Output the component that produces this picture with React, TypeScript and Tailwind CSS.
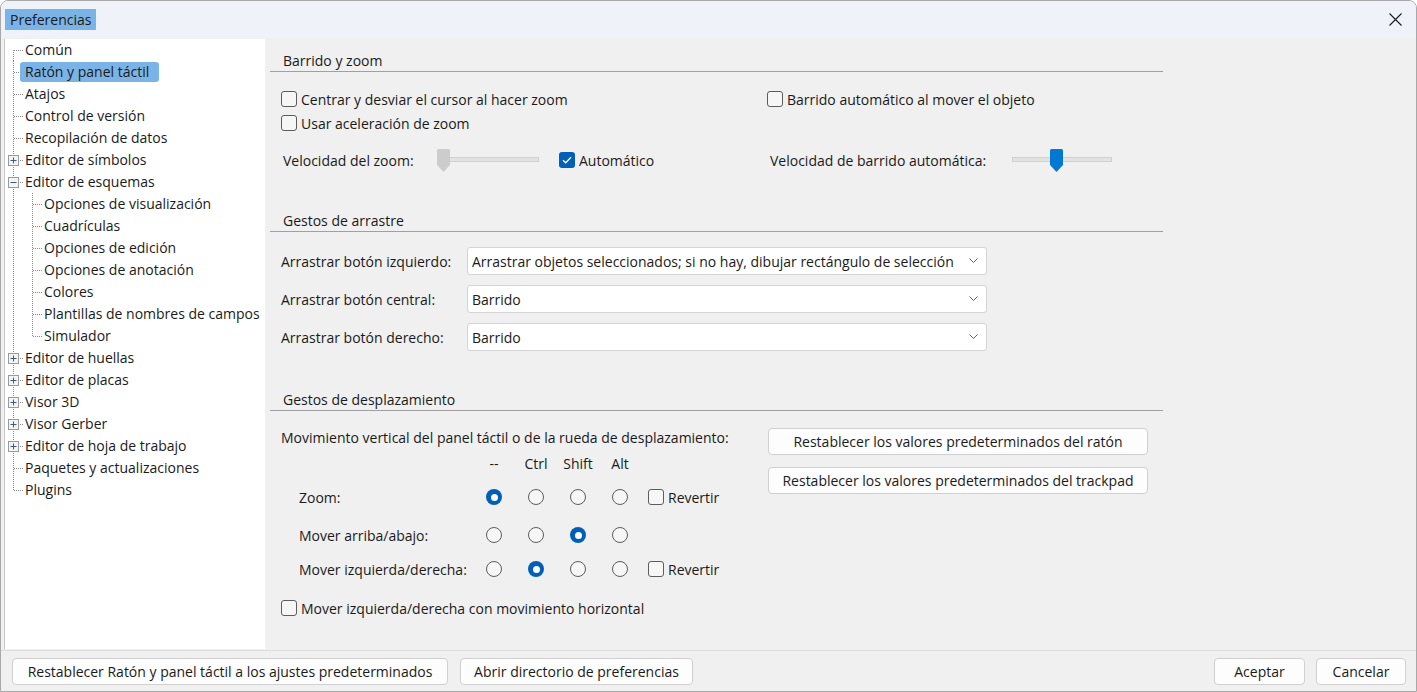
import React from "react";

const FONT = "font-['Open_Sans',sans-serif]";

function Check({ checked = false }: { checked?: boolean }) {
  if (checked) {
    return (
      <span className="w-4 h-4 shrink-0 rounded-[3px] bg-[#005fb8] flex items-center justify-center">
        <svg width="10" height="8" viewBox="0 0 10 8">
          <path d="M1 4.2 L3.7 6.8 L9 1.2" fill="none" stroke="white" strokeWidth="1.3" />
        </svg>
      </span>
    );
  }
  return <span className="w-4 h-4 shrink-0 rounded-[3px] border border-[#5c5c5c] bg-[#f6f6f6]" />;
}

function Radio({ checked = false }: { checked?: boolean }) {
  if (checked) {
    return (
      <span className="w-4 h-4 rounded-full bg-[#005fb8] flex items-center justify-center">
        <span className="w-[7px] h-[7px] rounded-full bg-white" />
      </span>
    );
  }
  return <span className="w-4 h-4 rounded-full border border-[#5c5c5c] bg-[#f6f6f6]" />;
}

function Thumb({ color }: { color: string }) {
  return (
    <svg width="13" height="23" viewBox="0 0 13 23">
      <path d="M1.5 0 H11.5 Q13 0 13 1.5 V16 L6.5 23 L0 16 V1.5 Q0 0 1.5 0Z" fill={color} />
    </svg>
  );
}

function Slider({ width, pos, color }: { width: number; pos: number; color: string }) {
  return (
    <div className="relative h-[23px]" style={{ width }}>
      <div className="absolute left-0 right-0 top-[8px] h-[5px] bg-[#e3e3e3] border border-[#d0d0d0]" />
      <div className="absolute top-0" style={{ left: pos }}>
        <Thumb color={color} />
      </div>
    </div>
  );
}

function Select({ value }: { value: string }) {
  return (
    <div className="w-[520px] h-[28px] bg-white border border-[#d4d4d4] rounded-[3px] flex items-center pl-[4px] pr-[8px] justify-between">
      <span>{value}</span>
      <svg width="9" height="6" viewBox="0 0 9 6">
        <path d="M0.5 0.5 L4.5 4.5 L8.5 0.5" fill="none" stroke="#606060" strokeWidth="1" />
      </svg>
    </div>
  );
}

function Button({ children, className = "" }: { children: React.ReactNode; className?: string }) {
  return (
    <div
      className={
        "h-[27px] bg-[#fdfdfd] border border-[#d0d0d0] rounded-[4px] flex items-center justify-center " + className
      }
    >
      {children}
    </div>
  );
}

function SectionHeader({ title, mt }: { title: string; mt: string }) {
  return (
    <div className={"h-[21px] border-b border-[#a0a0a0] pl-[13px] flex items-center " + mt}>
      <span className="leading-[20px]">{title}</span>
    </div>
  );
}

type TreeItem = {
  label: string;
  level: 0 | 1;
  exp?: "+" | "-";
  first?: boolean;
  last?: boolean;
  lastChild?: boolean;
  hl?: boolean;
};

const tree: TreeItem[] = [
  { label: "Común", level: 0, first: true },
  { label: "Ratón y panel táctil", level: 0, hl: true },
  { label: "Atajos", level: 0 },
  { label: "Control de versión", level: 0 },
  { label: "Recopilación de datos", level: 0 },
  { label: "Editor de símbolos", level: 0, exp: "+" },
  { label: "Editor de esquemas", level: 0, exp: "-" },
  { label: "Opciones de visualización", level: 1 },
  { label: "Cuadrículas", level: 1 },
  { label: "Opciones de edición", level: 1 },
  { label: "Opciones de anotación", level: 1 },
  { label: "Colores", level: 1 },
  { label: "Plantillas de nombres de campos", level: 1 },
  { label: "Simulador", level: 1, lastChild: true },
  { label: "Editor de huellas", level: 0, exp: "+" },
  { label: "Editor de placas", level: 0, exp: "+" },
  { label: "Visor 3D", level: 0, exp: "+" },
  { label: "Visor Gerber", level: 0, exp: "+" },
  { label: "Editor de hoja de trabajo", level: 0, exp: "+" },
  { label: "Paquetes y actualizaciones", level: 0 },
  { label: "Plugins", level: 0, last: true },
];

function TreeRow({ item }: { item: TreeItem }) {
  const dot = { stroke: "#8a8a8a", strokeDasharray: "1 1", strokeWidth: 1 } as const;
  return (
    <div className="relative h-[22px] flex items-center">
      <svg className="absolute left-0 top-0" width="44" height="22" viewBox="0 0 44 22">
        <line x1="8.5" y1={item.first ? 11 : 0} x2="8.5" y2={item.last ? 11.5 : 22} {...dot} />
        {item.level === 0 && <line x1={item.exp ? 13 : 9} y1="11.5" x2="18" y2="11.5" {...dot} />}
        {item.level === 1 && (
          <>
            <line x1="27.5" y1="0" x2="27.5" y2={item.lastChild ? 11.5 : 22} {...dot} />
            <line x1="28" y1="11.5" x2="37" y2="11.5" {...dot} />
          </>
        )}
        {item.exp && (
          <>
            <rect x="3.5" y="6.5" width="10" height="10" fill="#f4f4f4" stroke="#9a9a9a" />
            <line x1="5.5" y1="11.5" x2="11.5" y2="11.5" stroke="#3b5a8c" strokeWidth="1" />
            {item.exp === "+" && <line x1="8.5" y1="8.5" x2="8.5" y2="14.5" stroke="#3b5a8c" strokeWidth="1" />}
          </>
        )}
      </svg>
      {item.hl ? (
        <span className="relative ml-[15px] whitespace-nowrap leading-[20px] bg-[#7ab4e6] pl-[5px] pr-[10px] py-[0px] rounded-[3px]">
          {item.label}
        </span>
      ) : (
        <span className={(item.level === 0 ? "ml-[20px]" : "ml-[39px]") + " relative whitespace-nowrap leading-[20px]"}>
          {item.label}
        </span>
      )}
    </div>
  );
}

export default function App() {
  return (
    <div
      className={
        FONT +
        " w-[1417px] h-[692px] flex flex-col bg-[#f0f0f0] border border-[#a8a8a8] rounded-t-[8px] overflow-hidden text-[14px] text-[#1a1a1a]"
      }
    >
      {/* title bar */}
      <div className="h-[37px] shrink-0 bg-[#eff3f9] flex items-center justify-between pl-[4px] pr-[14px]">
        <span className="bg-[#7ab4e6] px-[5px] leading-[21px]">Preferencias</span>
        <svg width="13" height="13" viewBox="0 0 13 13">
          <path d="M0.5 0.5 L12.5 12.5 M12.5 0.5 L0.5 12.5" stroke="#1a1a1a" strokeWidth="1.1" />
        </svg>
      </div>

      {/* body */}
      <div className="flex-1 flex min-h-0">
        <div className="w-[261px] mt-[1px] ml-[3px] mb-[1px] bg-white border-l border-[#c8c8c8] shrink-0">
          {tree.map((t) => (
            <TreeRow key={t.label} item={t} />
          ))}
        </div>

        <div className="pl-[5px] w-[898px] flex flex-col">
          {/* Barrido y zoom */}
          <SectionHeader title="Barrido y zoom" mt="mt-[13px]" />
          <div className="flex pl-[11px]">
            <div className="w-[486px] flex flex-col">
              <div className="h-[24px] mt-[15px] flex items-center gap-[4px]">
                <Check />
                <span>Centrar y desviar el cursor al hacer zoom</span>
              </div>
              <div className="h-[24px] flex items-center gap-[4px]">
                <Check />
                <span>Usar aceleración de zoom</span>
              </div>
              <div className="h-[24px] mt-[13px] flex items-center pl-[2px]">
                <span className="w-[156px]">Velocidad del zoom:</span>
                <div className="mt-[1px]">
                  <Slider width={100} pos={-2} color="#cccccc" />
                </div>
                <div className="ml-[20px] flex items-center gap-[4px]">
                  <Check checked />
                  <span>Automático</span>
                </div>
              </div>
            </div>
            <div className="flex flex-col">
              <div className="h-[24px] mt-[15px] flex items-center gap-[4px]">
                <Check />
                <span>Barrido automático al mover el objeto</span>
              </div>
              <div className="h-[24px] mt-[37px] flex items-center pl-[3px]">
                <span className="w-[242px]">Velocidad de barrido automática:</span>
                <div className="mt-[1px]">
                  <Slider width={100} pos={38} color="#0078d4" />
                </div>
              </div>
            </div>
          </div>

          {/* Gestos de arrastre */}
          <SectionHeader title="Gestos de arrastre" mt="mt-[39px]" />
          <div className="pl-[11px] flex flex-col gap-[10px] mt-[15px]">
            <div className="flex items-center">
              <span className="w-[186px]">Arrastrar botón izquierdo:</span>
              <Select value="Arrastrar objetos seleccionados; si no hay, dibujar rectángulo de selección" />
            </div>
            <div className="flex items-center">
              <span className="w-[186px]">Arrastrar botón central:</span>
              <Select value="Barrido" />
            </div>
            <div className="flex items-center">
              <span className="w-[186px]">Arrastrar botón derecho:</span>
              <Select value="Barrido" />
            </div>
          </div>

          {/* Gestos de desplazamiento */}
          <SectionHeader title="Gestos de desplazamiento" mt="mt-[39px]" />
          <div className="flex pl-[11px]">
            <div className="w-[487px] flex flex-col">
              <div className="h-[20px] mt-[16px] flex items-center whitespace-nowrap">
                Movimiento vertical del panel táctil o de la rueda de desplazamiento:
              </div>
              <div className="mt-[4px] pl-[18px] grid grid-cols-[174px_42px_42px_42px_42px_auto]">
                <div className="h-[24px]" />
                <div className="h-[24px] flex items-center justify-center">--</div>
                <div className="h-[24px] flex items-center justify-center">Ctrl</div>
                <div className="h-[24px] flex items-center justify-center">Shift</div>
                <div className="h-[24px] flex items-center justify-center">Alt</div>
                <div className="h-[24px]" />

                <div className="h-[44px] flex items-center">Zoom:</div>
                <div className="h-[44px] flex items-center justify-center"><Radio checked /></div>
                <div className="h-[44px] flex items-center justify-center"><Radio /></div>
                <div className="h-[44px] flex items-center justify-center"><Radio /></div>
                <div className="h-[44px] flex items-center justify-center"><Radio /></div>
                <div className="h-[44px] flex items-center gap-[4px] pl-[7px]"><Check /><span>Revertir</span></div>

                <div className="h-[32px] flex items-center">Mover arriba/abajo:</div>
                <div className="h-[32px] flex items-center justify-center"><Radio /></div>
                <div className="h-[32px] flex items-center justify-center"><Radio /></div>
                <div className="h-[32px] flex items-center justify-center"><Radio checked /></div>
                <div className="h-[32px] flex items-center justify-center"><Radio /></div>
                <div className="h-[32px]" />

                <div className="h-[36px] flex items-center">Mover izquierda/derecha:</div>
                <div className="h-[36px] flex items-center justify-center"><Radio /></div>
                <div className="h-[36px] flex items-center justify-center"><Radio checked /></div>
                <div className="h-[36px] flex items-center justify-center"><Radio /></div>
                <div className="h-[36px] flex items-center justify-center"><Radio /></div>
                <div className="h-[36px] flex items-center gap-[4px] pl-[7px]"><Check /><span>Revertir</span></div>
              </div>
              <div className="h-[24px] mt-[9px] flex items-center gap-[4px]">
                <Check />
                <span>Mover izquierda/derecha con movimiento horizontal</span>
              </div>
            </div>
            <div className="flex flex-col gap-[12px] mt-[17px]">
              <Button className="w-[380px] h-[26px]">Restablecer los valores predeterminados del ratón</Button>
              <Button className="w-[380px] h-[26px]">Restablecer los valores predeterminados del trackpad</Button>
            </div>
          </div>
        </div>
      </div>

      {/* bottom bar */}
      <div className="h-[41px] shrink-0 border-t border-[#dcdcdc] flex items-start pt-[7px] pl-[11px] pr-[10px]">
        <Button className="w-[436px]">Restablecer Ratón y panel táctil a los ajustes predeterminados</Button>
        <Button className="w-[233px] ml-[12px]">Abrir directorio de preferencias</Button>
        <div className="flex-1" />
        <Button className="w-[91px] border-[#005fb8]">Aceptar</Button>
        <Button className="w-[90px] ml-[11px]">Cancelar</Button>
      </div>
    </div>
  );
}
